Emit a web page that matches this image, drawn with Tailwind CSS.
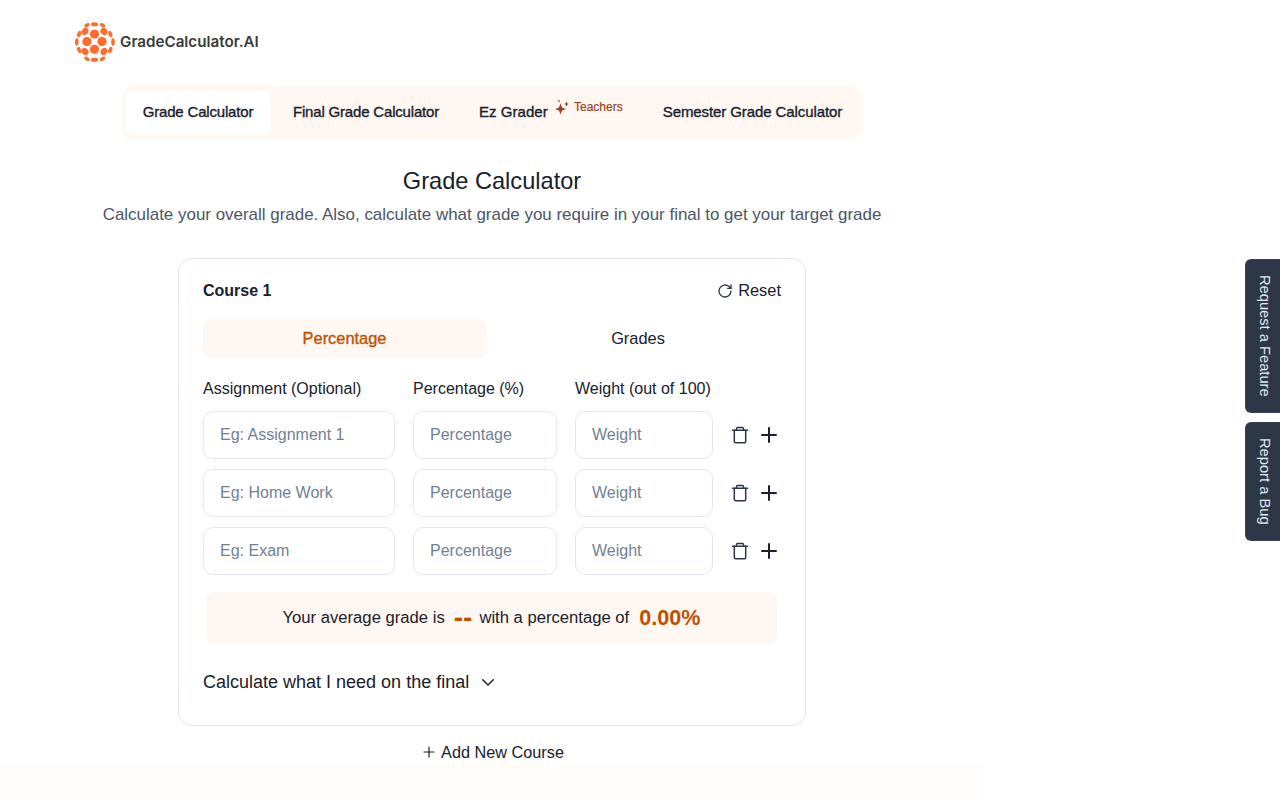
<!DOCTYPE html>
<html><head><meta charset="utf-8"><script src="https://cdn.jsdelivr.net/npm/@tailwindcss/browser@4"></script></head>
<body class="bg-white">
<div class="relative w-[1280px] h-[800px] overflow-hidden bg-white font-['Liberation_Sans',Arial,sans-serif] text-[#1a202c]">
  <div class="w-[984px] h-[800px] flex flex-col items-center">
    <div class="w-full h-[86px] pl-[75px] pt-[22px] flex items-start">
      <div class="flex items-center h-10 gap-[5px]">
        <svg width="40" height="40" viewBox="0 0 40 40" fill="#ff6b2c">
          <circle cx="19.500" cy="12" r="4.600"/><circle cx="12" cy="19.500" r="4.600"/><circle cx="27" cy="19.500" r="4.600"/><circle cx="19.500" cy="27.300" r="4.600"/>
          <ellipse cx="10" cy="9.500" rx="3.800" ry="3.200" transform="rotate(-45 10 9.500)"/><ellipse cx="29" cy="9.500" rx="3.800" ry="3.200" transform="rotate(45 29 9.500)"/><ellipse cx="10" cy="29.500" rx="3.800" ry="3.200" transform="rotate(45 10 29.500)"/><ellipse cx="29" cy="29.500" rx="3.800" ry="3.200" transform="rotate(-45 29 29.500)"/>
          <ellipse cx="19.500" cy="2.200" rx="3.600" ry="2"/><ellipse cx="19.500" cy="37.800" rx="3.600" ry="2"/><ellipse cx="1.800" cy="20" rx="1.800" ry="3.800"/><ellipse cx="38" cy="20" rx="1.800" ry="3.800"/>
          <ellipse cx="4.200" cy="12" rx="1.900" ry="3.300" transform="rotate(22 4.200 12)"/><ellipse cx="35.300" cy="12" rx="1.900" ry="3.300" transform="rotate(-22 35.300 12)"/>
          <ellipse cx="4.200" cy="28" rx="1.900" ry="3.300" transform="rotate(-22 4.200 28)"/><ellipse cx="35.300" cy="28" rx="1.900" ry="3.300" transform="rotate(22 35.300 28)"/>
          <ellipse cx="12" cy="3.200" rx="3" ry="1.800" transform="rotate(-28 12 3.200)"/><ellipse cx="27.500" cy="3.200" rx="3" ry="1.800" transform="rotate(28 27.500 3.200)"/>
          <ellipse cx="12" cy="36.800" rx="3" ry="1.800" transform="rotate(28 12 36.800)"/><ellipse cx="27.500" cy="36.800" rx="3" ry="1.800" transform="rotate(-28 27.500 36.800)"/>
        </svg>
        <span class="font-['Inter'] font-semibold text-[15.200px] text-[#3a3a3a]">GradeCalculator.AI</span>
      </div>
    </div>
    <nav class="w-[740px] h-[53px] bg-[#fff7f2] rounded-[10px] px-1 py-1 flex items-center text-[15px] tracking-[-0.18px]">
      <a class="h-[45px] w-[144px] bg-white rounded-lg flex items-center justify-center [-webkit-text-stroke:0.35px]">Grade Calculator</a>
      <a class="h-[45px] w-[184px] ml-[4px] flex items-center justify-center [-webkit-text-stroke:0.35px]">Final Grade Calculator</a>
      <a class="relative h-[45px] w-[189px] flex items-center pl-[21px] tracking-[0.05px] [-webkit-text-stroke:0.35px]">Ez Grader
        <span class="absolute left-[96px] top-[8px] flex items-center gap-[4px] text-[12px] tracking-normal text-[#9c4221] [-webkit-text-stroke:0.2px]">
          <svg width="16" height="16" viewBox="0 0 16 16" fill="#9c4221"><path d="M6.500 4.500 8 8.500l4 1.500-4 1.500-1.500 4-1.500-4-4-1.500 4-1.500z"/><path d="M12.500 2.500l.7 1.800 1.800.7-1.800.7-.7 1.800-.7-1.800-1.800-.7 1.800-.7z"/><path d="M5 .5l.4 1.100 1.100.4-1.100.4L5 3.500l-.4-1.100L3.500 2l1.100-.4z"/></svg>
          <span>Teachers</span>
        </span>
      </a>
      <a class="h-[45px] flex-1 flex items-center justify-center tracking-[-0.09px] [-webkit-text-stroke:0.35px]">Semester Grade Calculator</a>
    </nav>
    <h1 class="mt-[26px] text-[23.600px] leading-[32px] text-[#1a202c]">Grade Calculator</h1>
    <p class="mt-[6px] text-[16.950px] leading-[24px] text-[#4a5568] whitespace-nowrap">Calculate your overall grade. Also, calculate what grade you require in your final to get your target grade</p>
    <section class="mt-[31px] w-[628px] h-[468px] border border-[#e2e8f0] rounded-[14px] px-6 pt-[20px] bg-white shrink-0">
      <div class="flex items-center justify-between h-6">
        <h2 class="text-[16px] font-bold">Course 1</h2>
        <button class="flex items-center gap-[5px] text-[16.400px] text-[#1a202c] mb-[2px]">
          <svg width="16" height="16" viewBox="0 0 24 24" fill="none" stroke="#2d3748" stroke-width="2" stroke-linecap="round" stroke-linejoin="round" class="mt-[1px]"><path d="M21 12a9 9 0 1 1-3-6.700L21 8"/><path d="M21 3v5h-5"/></svg>
          Reset
        </button>
      </div>
      <div class="mt-[16px] flex h-[39px] text-[16.400px]">
        <div class="w-[283px] rounded-lg bg-[#fff7f2] text-[#c05000] flex items-center justify-center [-webkit-text-stroke:0.35px]">Percentage</div>
        <div class="w-[295px] pl-[9px] flex items-center justify-center">Grades</div>
      </div>
      <div class="mt-[19px] flex gap-[18px] text-[16px] leading-6 h-[24px]">
        <label class="w-[192px]">Assignment (Optional)</label>
        <label class="w-[144px]">Percentage (%)</label>
        <label class="w-[138px] whitespace-nowrap">Weight (out of 100)</label>
      </div>
      <div class="mt-[10px] flex flex-col gap-[10px]">
        <div class="flex gap-[18px] items-center">
          <input class="w-[192px] h-[48px] border border-[#e2e8f0] rounded-[10px] px-4 text-[16px] placeholder:text-[#718096]" placeholder="Eg: Assignment 1">
          <input class="w-[144px] h-[48px] border border-[#e2e8f0] rounded-[10px] px-4 text-[16px] placeholder:text-[#718096]" placeholder="Percentage">
          <input class="w-[138px] h-[48px] border border-[#e2e8f0] rounded-[10px] px-4 text-[16px] placeholder:text-[#718096]" placeholder="Weight">
          <div class="flex items-center gap-[9px] ml-[-1px]">
            <svg width="20" height="20" viewBox="0 0 20 20" fill="none" stroke="#2d3748" stroke-width="1.500" stroke-linecap="round" stroke-linejoin="round"><path d="M2.500 5.300h15"/><path d="M4.300 5.300v11a1.500 1.500 0 0 0 1.500 1.500h8.400a1.500 1.500 0 0 0 1.500-1.500v-11"/><path d="M6.500 5.300V3.500a1 1 0 0 1 1-1h5a1 1 0 0 1 1 1v1.800"/></svg>
            <svg width="20" height="20" viewBox="0 0 20 20" fill="none" stroke="#1a202c" stroke-width="2" stroke-linecap="round"><path d="M10 3v14M3 10h14"/></svg>
          </div>
        </div>
        <div class="flex gap-[18px] items-center">
          <input class="w-[192px] h-[48px] border border-[#e2e8f0] rounded-[10px] px-4 text-[16px] placeholder:text-[#718096]" placeholder="Eg: Home Work">
          <input class="w-[144px] h-[48px] border border-[#e2e8f0] rounded-[10px] px-4 text-[16px] placeholder:text-[#718096]" placeholder="Percentage">
          <input class="w-[138px] h-[48px] border border-[#e2e8f0] rounded-[10px] px-4 text-[16px] placeholder:text-[#718096]" placeholder="Weight">
          <div class="flex items-center gap-[9px] ml-[-1px]">
            <svg width="20" height="20" viewBox="0 0 20 20" fill="none" stroke="#2d3748" stroke-width="1.500" stroke-linecap="round" stroke-linejoin="round"><path d="M2.500 5.300h15"/><path d="M4.300 5.300v11a1.500 1.500 0 0 0 1.500 1.500h8.400a1.500 1.500 0 0 0 1.500-1.500v-11"/><path d="M6.500 5.300V3.500a1 1 0 0 1 1-1h5a1 1 0 0 1 1 1v1.800"/></svg>
            <svg width="20" height="20" viewBox="0 0 20 20" fill="none" stroke="#1a202c" stroke-width="2" stroke-linecap="round"><path d="M10 3v14M3 10h14"/></svg>
          </div>
        </div>
        <div class="flex gap-[18px] items-center">
          <input class="w-[192px] h-[48px] border border-[#e2e8f0] rounded-[10px] px-4 text-[16px] placeholder:text-[#718096]" placeholder="Eg: Exam">
          <input class="w-[144px] h-[48px] border border-[#e2e8f0] rounded-[10px] px-4 text-[16px] placeholder:text-[#718096]" placeholder="Percentage">
          <input class="w-[138px] h-[48px] border border-[#e2e8f0] rounded-[10px] px-4 text-[16px] placeholder:text-[#718096]" placeholder="Weight">
          <div class="flex items-center gap-[9px] ml-[-1px]">
            <svg width="20" height="20" viewBox="0 0 20 20" fill="none" stroke="#2d3748" stroke-width="1.500" stroke-linecap="round" stroke-linejoin="round"><path d="M2.500 5.300h15"/><path d="M4.300 5.300v11a1.500 1.500 0 0 0 1.500 1.500h8.400a1.500 1.500 0 0 0 1.500-1.500v-11"/><path d="M6.500 5.300V3.500a1 1 0 0 1 1-1h5a1 1 0 0 1 1 1v1.800"/></svg>
            <svg width="20" height="20" viewBox="0 0 20 20" fill="none" stroke="#1a202c" stroke-width="2" stroke-linecap="round"><path d="M10 3v14M3 10h14"/></svg>
          </div>
        </div>
      </div>
      <div class="mt-[17px] ml-[3px] w-[571px] h-[52px] bg-[#fff7f2] rounded-lg flex items-center justify-center text-[16.650px]">
        <span>Your average grade is</span>
        <span class="ml-[9px] font-bold text-[#c05000] text-[28px] leading-none">--</span>
        <span class="ml-[7px]">with a percentage of</span>
        <span class="ml-[10px] font-bold text-[#c05000] text-[21.600px] leading-none">0.00%</span>
      </div>
      <div class="mt-[26px] flex items-center gap-[10px] text-[18px] leading-6">
        <span>Calculate what I need on the final</span>
        <svg width="18" height="18" viewBox="0 0 24 24" fill="none" stroke="#1a202c" stroke-width="2" stroke-linecap="round" stroke-linejoin="round"><path d="M5 9l7 7 7-7"/></svg>
      </div>
    </section>
    <button class="mt-[15px] h-[22px] shrink-0 flex items-center gap-[6px] text-[16.250px] leading-6">
      <svg class="ml-[3px]" width="12" height="12" viewBox="0 0 12 12" fill="none" stroke="#1a202c" stroke-width="1.200" stroke-linecap="round"><path d="M6 1v10M1 6h10"/></svg>
      Add New Course
    </button>
    <div class="w-full flex-1 bg-[#fffefc]"></div>
  </div>
  <a class="absolute left-[1245px] top-[259px] w-[45px] h-[154px] bg-[#2d3748] rounded-[6px] border border-[#4a5568]/40 text-[#e2e8f0] text-[14.700px] flex items-center justify-start pl-[8px]"><span class="[writing-mode:vertical-rl] whitespace-nowrap">Request a Feature</span></a>
  <a class="absolute left-[1245px] top-[422px] w-[45px] h-[119px] bg-[#2d3748] rounded-[6px] border border-[#4a5568]/40 text-[#e2e8f0] text-[14.700px] flex items-center justify-start pl-[8px]"><span class="[writing-mode:vertical-rl] whitespace-nowrap">Report a Bug</span></a>
</div>
</body></html>
